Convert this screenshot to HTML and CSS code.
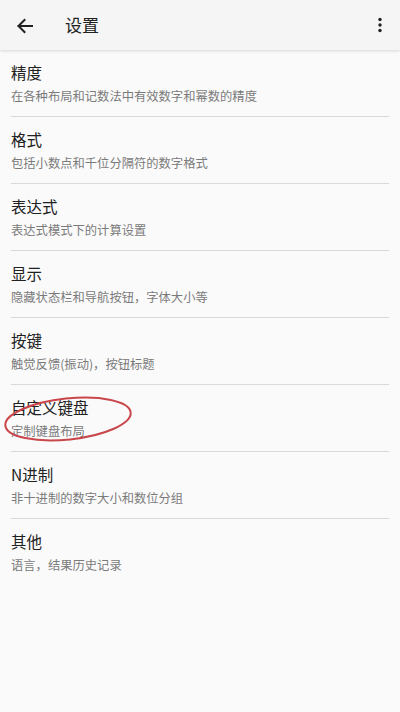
FILE: index.html
```html
<!DOCTYPE html>
<html lang="zh">
<head>
<meta charset="utf-8">
<link rel="stylesheet" href="styles.css">
</head>
<body>
<header class="appbar">
  <svg class="back" width="18" height="16" viewBox="0 0 18 16"><path d="M16 8H2.5M8.5 2L2.5 8l6 6" fill="none" stroke="#212121" stroke-width="2" stroke-linecap="square"/></svg>
  <div class="title">设置</div>
  <svg class="more" width="4" height="16" viewBox="0 0 4 16"><circle cx="2" cy="2.5" r="1.7" fill="#212121"/><circle cx="2" cy="8" r="1.7" fill="#212121"/><circle cx="2" cy="13.5" r="1.7" fill="#212121"/></svg>
</header>
<main class="list">
  <div class="item"><div class="t">精度</div><div class="s">在各种布局和记数法中有效数字和幂数的精度</div></div>
  <div class="item"><div class="t">格式</div><div class="s">包括小数点和千位分隔符的数字格式</div></div>
  <div class="item"><div class="t">表达式</div><div class="s">表达式模式下的计算设置</div></div>
  <div class="item"><div class="t">显示</div><div class="s">隐藏状态栏和导航按钮，字体大小等</div></div>
  <div class="item"><div class="t">按键</div><div class="s">触觉反馈(振动)，按钮标题</div></div>
  <div class="item marked"><div class="t">自定义键盘</div><div class="s">定制键盘布局</div>
    <svg class="circle" width="160" height="67" viewBox="0 0 160 67"><ellipse cx="68" cy="34" rx="63" ry="20.5" transform="rotate(-6 68 34)" fill="none" stroke="#c9474b" stroke-width="2"/></svg>
  </div>
  <div class="item"><div class="t">N进制</div><div class="s">非十进制的数字大小和数位分组</div></div>
  <div class="item last"><div class="t">其他</div><div class="s">语言，结果历史记录</div></div>
</main>
</body>
</html>
```
FILE: styles.css
```css
html, body {
  margin: 0;
  padding: 0;
  background: #fafafa;
  font-family: "Noto Sans CJK SC", "Noto Sans", sans-serif;
}
.appbar {
  height: 50px;
  background: #f5f5f5;
  box-shadow: 0 1px 3px rgba(0,0,0,0.14);
  display: flex;
  align-items: center;
  padding: 0 18px 0 16px;
  position: relative;
  z-index: 1;
}
.back { flex: none; margin-top: 1px; }
.title {
  margin-left: 31px;
  font-size: 17px;
  color: #212121;
  flex: 1;
  line-height: 24px;
}
.more { flex: none; }
.list {
  padding: 0 11px;
}
.item {
  position: relative;
  padding: 11px 0 11px 0;
  border-bottom: 1px solid #d9d9d9;
}
.item.last { border-bottom: none; }
.t {
  font-size: 15.5px;
  line-height: 22px;
  color: #212121;
}
.s {
  margin-top: 4px;
  font-size: 12.3px;
  line-height: 18px;
  color: #7a7a7a;
}
.circle {
  position: absolute;
  left: -11px;
  top: 0;
}
```
